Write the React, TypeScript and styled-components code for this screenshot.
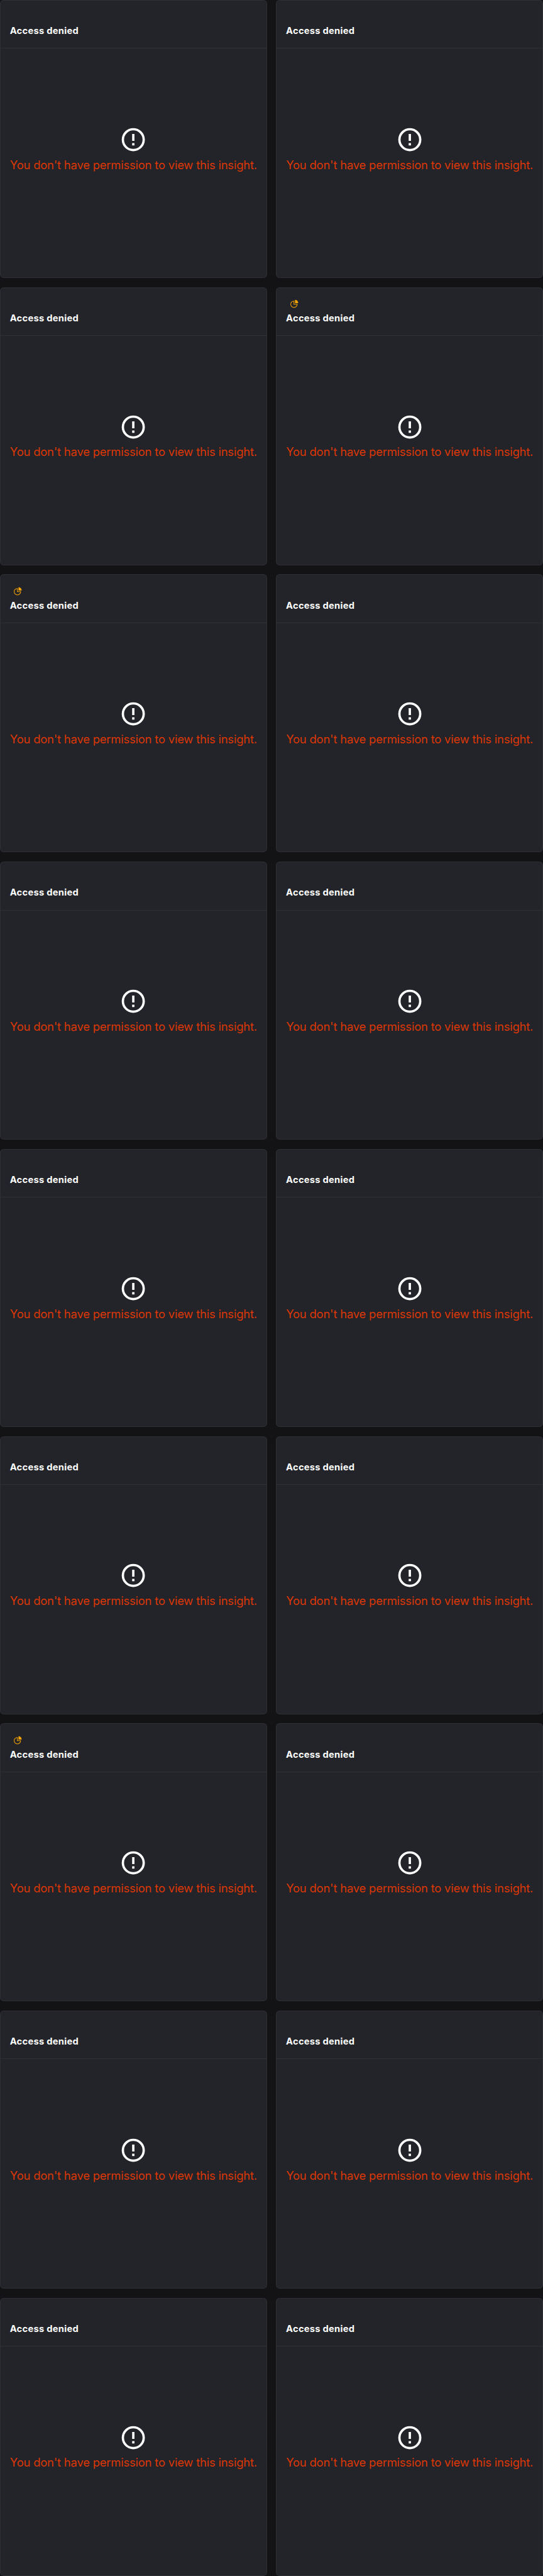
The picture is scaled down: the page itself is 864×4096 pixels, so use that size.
import React from "react";
import styled, { createGlobalStyle } from "styled-components";

const SCALE = 4096 / 4448;
const u = (n: number) => `${(n * SCALE).toFixed(3)}px`;

const GlobalStyle = createGlobalStyle`
  * { box-sizing: border-box; }
  body {
    margin: 0;
    background: #131315;
    font-family: Inter, "Liberation Sans", sans-serif;
  }
`;

const Dashboard = styled.main`
  display: grid;
  grid-template-columns: repeat(2, minmax(0, 1fr));
  grid-auto-rows: ${u(480)};
  gap: ${u(16)};
  width: 100%;
  height: 4096px;
`;

const Card = styled.section`
  display: flex;
  flex-direction: column;
  overflow: hidden;
  border: 1px solid #2f3036;
  border-radius: ${u(6)};
  background: #232429;
`;

const CardHeader = styled.header`
  display: flex;
  flex-direction: column;
  flex: none;
  height: ${u(83)};
  padding: ${u(16.5)} ${u(16)} 0;
  border-bottom: 1px solid #2f3036;
`;

const CardMeta = styled.div`
  height: ${u(24)};
  padding: ${u(3.5)} 0 0 ${u(6)};
`;

const CardTitle = styled.h4`
  margin: 0;
  color: #fff;
  font-size: ${u(16)};
  line-height: ${u(24)};
  font-weight: 700;
  letter-spacing: 0.25px;
  white-space: nowrap;
`;

const CardBody = styled.div`
  display: flex;
  flex-direction: column;
  align-items: center;
  padding-top: ${u(133)};
`;

const WarningIcon = styled.svg`
  display: block;
  width: ${u(48)};
  height: ${u(48)};
`;

const PieIcon = styled.svg`
  display: block;
  width: ${u(16)};
  height: ${u(16)};
`;

const ErrorText = styled.p`
  margin: ${u(5)} 0 0;
  color: #db3707;
  font-size: ${u(20)};
  line-height: ${u(30)};
  font-weight: 400;
  letter-spacing: -0.2px;
  white-space: nowrap;
`;

const CARDS = Array.from({ length: 18 }, (_, i) => ({
  id: i,
  pie: [3, 4, 12].includes(i),
}));

function InsightCard({ pie }: { pie: boolean }) {
  return (
    <Card>
      <CardHeader>
        <CardMeta>
          {pie && (
            <PieIcon viewBox="0 0 16 16" fill="none">
              <path d="M7.3 2.9A5.6 5.6 0 1 0 12.9 8.5H7.3Z" stroke="#f7a501" strokeWidth="1.1" />
              <path d="M9.2 0.9A5.5 5.5 0 0 1 14.7 6.4H9.2Z" fill="#f7a501" />
            </PieIcon>
          )}
        </CardMeta>
        <CardTitle>Access denied</CardTitle>
      </CardHeader>
      <CardBody>
        <WarningIcon viewBox="0 0 24 24" fill="#fff">
          <path d="M11 15h2v2h-2zm0-8h2v6h-2zm1-5a10 10 0 1 0 0 20 10 10 0 0 0 0-20zm0 18a8 8 0 1 1 0-16 8 8 0 0 1 0 16z" />
        </WarningIcon>
        <ErrorText>You don't have permission to view this insight.</ErrorText>
      </CardBody>
    </Card>
  );
}

export default function App() {
  return (
    <>
      <GlobalStyle />
      <Dashboard>
        {CARDS.map((card) => (
          <InsightCard key={card.id} pie={card.pie} />
        ))}
      </Dashboard>
    </>
  );
}
